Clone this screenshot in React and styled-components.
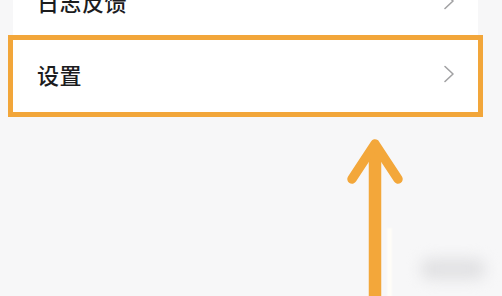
import React from 'react'
import styled, { createGlobalStyle } from 'styled-components'

const GlobalStyle = createGlobalStyle`
  html, body {
    margin: 0;
    padding: 0;
    background: #f7f7f8;
    font-family: "Noto Sans CJK SC", "Noto Sans", sans-serif;
  }
`

const Chevron = () =>
  <S.ChevronIcon viewBox="0 0 12 18" width="12" height="18">
    <path d="M2 1.5 L10 9 L2 16.5" fill="none" stroke="#a2a2a4" strokeWidth="1.6" strokeLinecap="round" strokeLinejoin="round" />
  </S.ChevronIcon>

const Arrow = () =>
  <S.ArrowSvg viewBox="0 0 60 160" width="60" height="160">
    <path d="M30 10 L30 160" stroke="#f3a73a" strokeWidth="12.5" fill="none" />
    <path d="M7 43 L30 8 L53 43" stroke="#f3a73a" strokeWidth="9.5" fill="none" strokeLinecap="round" strokeLinejoin="round" />
  </S.ArrowSvg>

const App = () =>
  <S.Page>
    <GlobalStyle />
    <S.Card>
      <S.Row>
        <S.Label>日志反馈</S.Label>
        <Chevron />
      </S.Row>
      <S.Row highlighted>
        <S.Label>设置</S.Label>
        <Chevron />
      </S.Row>
    </S.Card>
    <Arrow />
    <S.Glare />
    <S.Smudge />
  </S.Page>

const S = {
  Page: styled.div`
    position: relative;
    width: 502px;
    height: 296px;
    overflow: hidden;
    background: #f7f7f8;
  `,
  Card: styled.section`
    display: flex;
    flex-direction: column;
    width: 465px;
    margin: -34px 0 0 13px;
    background: #fff;
  `,
  Row: styled.div`
    display: flex;
    align-items: center;
    justify-content: space-between;
    height: ${p => p.highlighted ? '72px' : '74px'};
    padding: 0 23px 4px 24px;
    box-sizing: border-box;
    background: #fff;
    outline: ${p => p.highlighted ? '5px solid #f2a63a' : 'none'};
  `,
  Label: styled.span`
    font-size: 22px;
    font-weight: 500;
    color: #1c1c1e;
    letter-spacing: 0.5px;
  `,
  ChevronIcon: styled.svg`
    display: block;
  `,
  ArrowSvg: styled.svg`
    position: absolute;
    left: 345px;
    top: 136px;
  `,
  Glare: styled.div`
    position: absolute;
    left: 387px;
    top: 228px;
    width: 5px;
    height: 70px;
    background: #fffdf8;
    filter: blur(1px);
  `,
  Smudge: styled.div`
    position: absolute;
    left: 420px;
    top: 258px;
    width: 66px;
    height: 22px;
    border-radius: 11px;
    background: #e2e2e4;
    filter: blur(7px);
  `
}

export default App
